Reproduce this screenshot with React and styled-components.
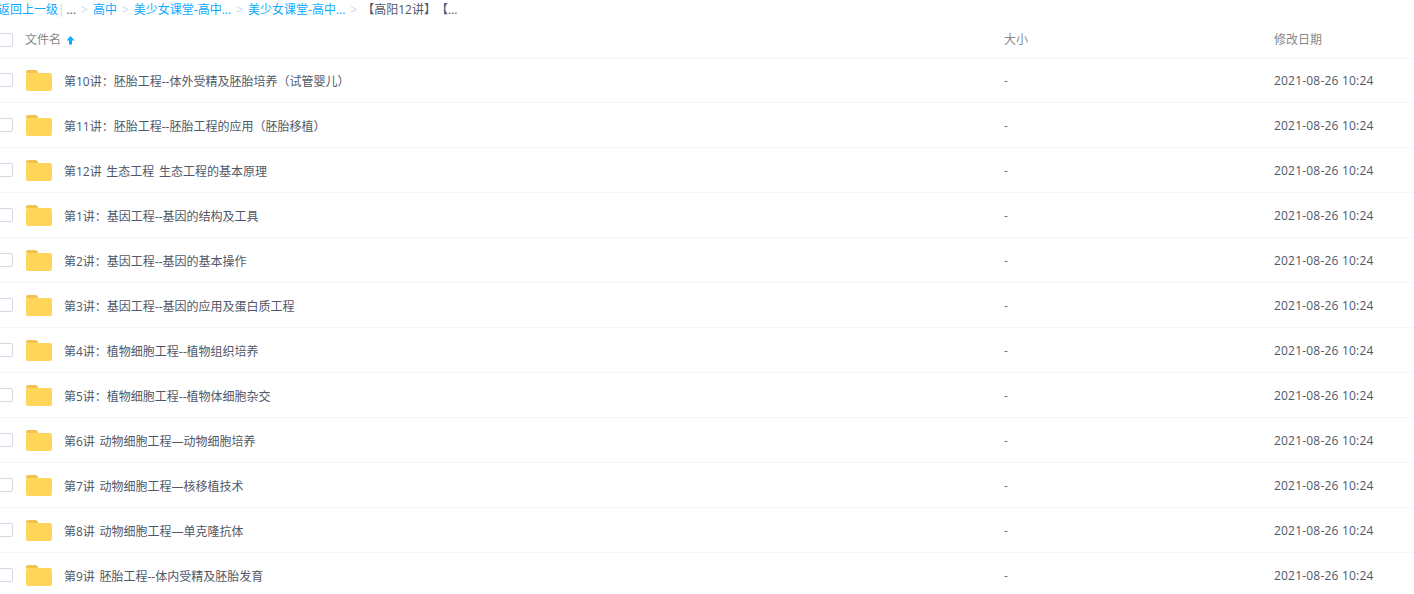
import React from "react";
import styled, { createGlobalStyle } from "styled-components";

const Global = createGlobalStyle`
  html, body { margin: 0; padding: 0; background: #fff; overflow: hidden; }
  body {
    font-family: "Open Sans", "Noto Sans CJK SC", sans-serif;
    font-size: 12px;
    color: #505868;
    text-spacing-trim: space-all;
  }
`;

const Page = styled.div`
  width: 1416px;
  height: 594px;
  margin-left: -2px;
  overflow: hidden;
`;

const Crumbs = styled.div`
  display: flex;
  align-items: center;
  height: 20px;
  line-height: 18px;
  white-space: nowrap;
  box-sizing: border-box;
  padding-bottom: 1px;
`;

const CrumbLink = styled.span`
  color: #09aaff;
`;

const Sep = styled.span`
  color: #c5d8f3;
  margin: 0 5px;
`;

const Pipe = styled.span`
  color: #c5d8f3;
  margin: 0 2px 0 0;
`;

const Plain = styled.span`
  color: #505868;
`;

const Row = styled.div`
  display: grid;
  grid-template-columns: 28px 38px 940px 270px 1fr;
  align-items: center;
  height: ${(p) => (p.$head ? "39px" : "45px")};
  padding-top: ${(p) => (p.$head ? "2px" : "0")};
  box-sizing: border-box;
  border-bottom: 1px solid #f4f6fb;
  color: ${(p) => (p.$head ? "#888" : "#505868")};
`;

const Check = styled.span`
  border: 1px solid #d3d9e4;
  border-radius: 2px;
  box-sizing: border-box;
  display: block;
  width: 15px;
  height: 14px;
`;

const NameHead = styled.div`
  grid-column: 2 / 4;
  margin-left: -1px;
  margin-top: -2px;
  display: flex;
  align-items: center;
  gap: 5px;
`;

const Cell = styled.div`
  white-space: nowrap;
`;

const HeadCell = styled(Cell)`
  margin-top: -2px;
`;

const NameCell = styled(Cell)`
  margin-top: 1px;
  word-spacing: 1.5px;
`;

const DateCell = styled(Cell)`
  letter-spacing: 0.2px;
`;

const Dim = styled(Cell)`
  color: #6b7280;
`;

const List = styled.div`
  margin-top: -1px;
`;

const FolderSvg = styled.svg`
  display: block;
  margin-top: 1px;
`;

const ArrowSvg = styled.svg`
  display: block;
  margin-top: 1px;
`;

const FolderIcon = () => (
  <FolderSvg width="26" height="21" viewBox="0 0 26 21">
    <path d="M0 2a2 2 0 0 1 2-2h7.5a2 2 0 0 1 1.6.8L12.5 3H0z" fill="#f1c24f" />
    <path d="M0 5a2 2 0 0 1 2-2h22a2 2 0 0 1 2 2v14a2 2 0 0 1-2 2H2a2 2 0 0 1-2-2z" fill="#ffd659" />
  </FolderSvg>
);

const Arrow = () => (
  <ArrowSvg width="9" height="10" viewBox="0 0 9 10">
    <path d="M4.5 1 8.5 5.5H6V9.5H3V5.5H.5z" fill="#09aaff" />
  </ArrowSvg>
);

const files = [
  "第10讲:胚胎工程--体外受精及胚胎培养(试管婴儿)",
  "第11讲:胚胎工程--胚胎工程的应用(胚胎移植)",
  "第12讲 生态工程 生态工程的基本原理",
  "第1讲:基因工程--基因的结构及工具",
  "第2讲:基因工程--基因的基本操作",
  "第3讲:基因工程--基因的应用及蛋白质工程",
  "第4讲:植物细胞工程--植物组织培养",
  "第5讲:植物细胞工程--植物体细胞杂交",
  "第6讲 动物细胞工程—动物细胞培养",
  "第7讲 动物细胞工程—核移植技术",
  "第8讲 动物细胞工程—单克隆抗体",
  "第9讲 胚胎工程--体内受精及胚胎发育",
].map((s) =>
  s.replace(/:/g, "\uFF1A").replace(/\(/g, "\uFF08").replace(/\)/g, "\uFF09")
);

export default function App() {
  return (
    <Page>
      <Global />
      <Crumbs>
        <CrumbLink>返回上一级</CrumbLink>
        <Pipe>|</Pipe>
        <Plain>...</Plain>
        <Sep>&gt;</Sep>
        <CrumbLink>高中</CrumbLink>
        <Sep>&gt;</Sep>
        <CrumbLink>美少女课堂-高中...</CrumbLink>
        <Sep>&gt;</Sep>
        <CrumbLink>美少女课堂-高中...</CrumbLink>
        <Sep>&gt;</Sep>
        <Plain>【高阳12讲】【...</Plain>
      </Crumbs>
      <Row $head>
        <Check />
        <NameHead>
          文件名 <Arrow />
        </NameHead>
        <HeadCell>大小</HeadCell>
        <HeadCell>修改日期</HeadCell>
      </Row>
      <List>
        {files.map((f) => (
          <Row key={f}>
            <Check />
            <FolderIcon />
            <NameCell>{f}</NameCell>
            <Dim>-</Dim>
            <DateCell>2021-08-26 10:24</DateCell>
          </Row>
        ))}
      </List>
    </Page>
  );
}
